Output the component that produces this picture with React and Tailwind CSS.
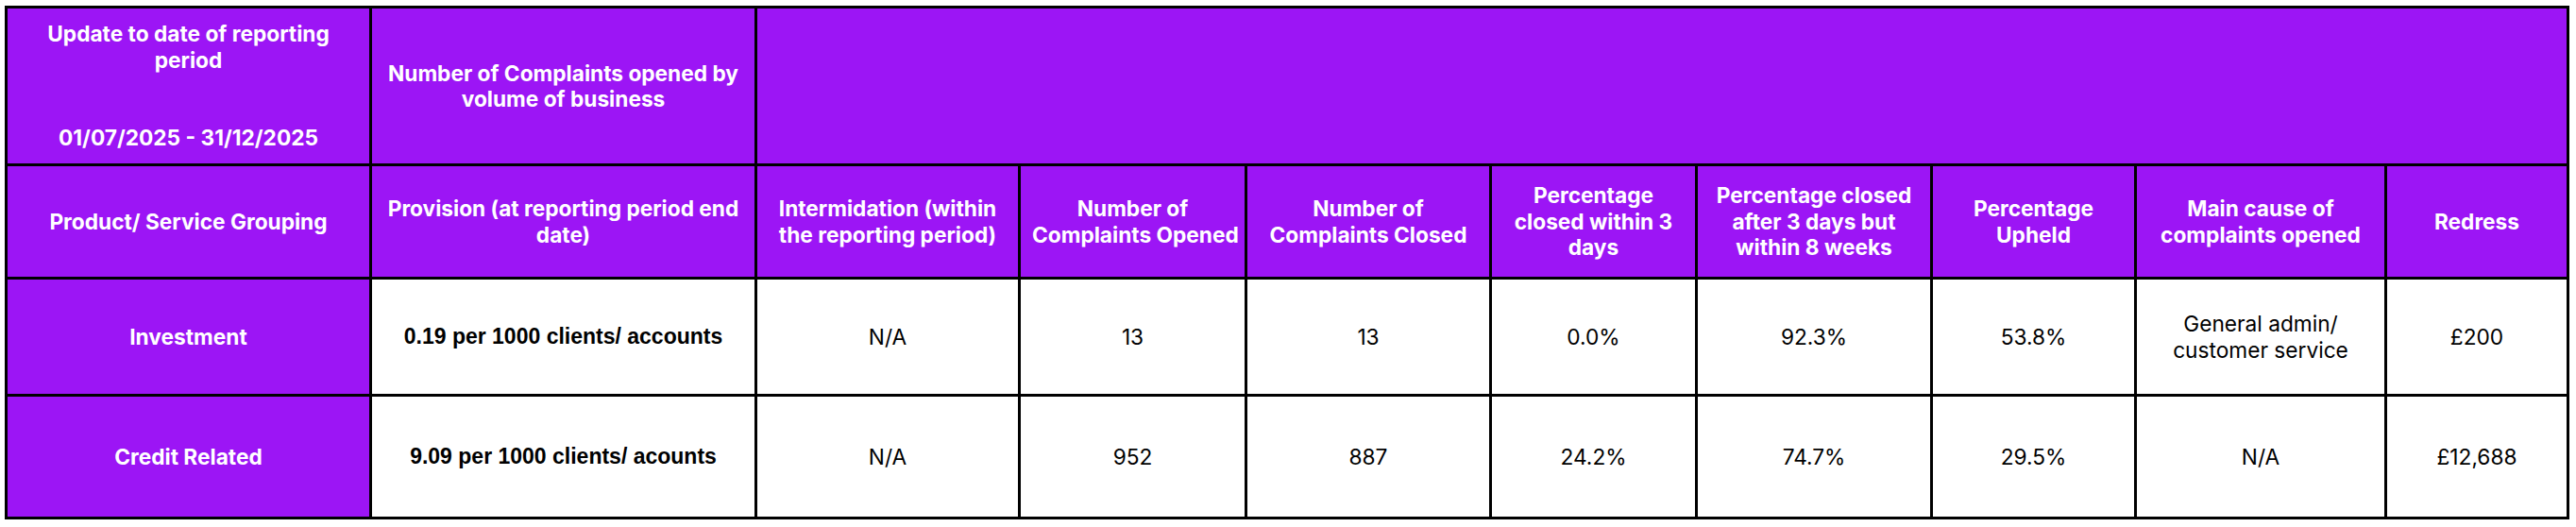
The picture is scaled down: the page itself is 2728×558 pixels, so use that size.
const cols = [386, 408, 279, 240, 259, 218, 249, 216, 265, 193]

const headers = [
  ['Product/ Service Grouping'],
  ['Provision (at reporting period end', 'date)'],
  ['Intermidation (within', 'the reporting period)'],
  ['Number of', 'Complaints Opened'],
  ['Number of', 'Complaints Closed'],
  ['Percentage', 'closed within 3', 'days'],
  ['Percentage closed', 'after 3 days but', 'within 8 weeks'],
  ['Percentage', 'Upheld'],
  ['Main cause of', 'complaints opened'],
  ['Redress'],
]

const rows = [
  {
    label: 'Investment',
    provision: '0.19 per 1000 clients/ accounts',
    cells: ['N/A', '13', '13', '0.0%', '92.3%', '53.8%', ['General admin/', 'customer service'], '£200'],
  },
  {
    label: 'Credit Related',
    provision: '9.09 per 1000 clients/ acounts',
    cells: ['N/A', '952', '887', '24.2%', '74.7%', '29.5%', 'N/A', '£12,688'],
  },
]

const purple = 'bg-[#9c15f5] text-white font-bold'
const cell = 'border-[3px] border-black text-center align-middle px-3 leading-[27.5px] whitespace-nowrap'

function Lines({ lines }) {
  return lines.map((l, i) => (
    <span key={i}>
      {i > 0 && <br />}
      {l}
    </span>
  ))
}

export default function App() {
  return (
    <div className="min-h-screen bg-white pt-[6px] pl-[5px] font-['Inter',sans-serif] text-[22.7px]">
      <table className="border-collapse table-fixed w-[2716px]">
        <colgroup>
          {cols.map((w, i) => (
            <col key={i} style={{ width: w }} />
          ))}
        </colgroup>
        <tbody>
          <tr className="h-[167px]">
            <td className={`${cell} ${purple}`}>
              Update to date of reporting
              <br />
              period
              <br />
              &nbsp;
              <br />
              &nbsp;
              <br />
              01/07/2025 - 31/12/2025
            </td>
            <td className={`${cell} ${purple}`}>
              Number of Complaints opened by
              <br />
              volume of business
            </td>
            <td className={`${cell} ${purple}`} colSpan={8}></td>
          </tr>
          <tr className="h-[120px]">
            {headers.map((h, i) => (
              <td key={i} className={`${cell} ${purple} px-0`}>
                <Lines lines={h} />
              </td>
            ))}
          </tr>
          {rows.map((r, ri) => (
            <tr key={r.label} className={ri === 0 ? 'h-[124px]' : 'h-[130px]'}>
              <td className={`${cell} ${purple}`}>{r.label}</td>
              <td className={`${cell} bg-white text-black font-bold font-['Liberation_Sans',Arial,sans-serif] text-[23px]`}>
                {r.provision}
              </td>
              {r.cells.map((c, ci) => (
                <td key={ci} className={`${cell} bg-white text-black font-normal`}>
                  {Array.isArray(c) ? <Lines lines={c} /> : c}
                </td>
              ))}
            </tr>
          ))}
        </tbody>
      </table>
    </div>
  )
}
